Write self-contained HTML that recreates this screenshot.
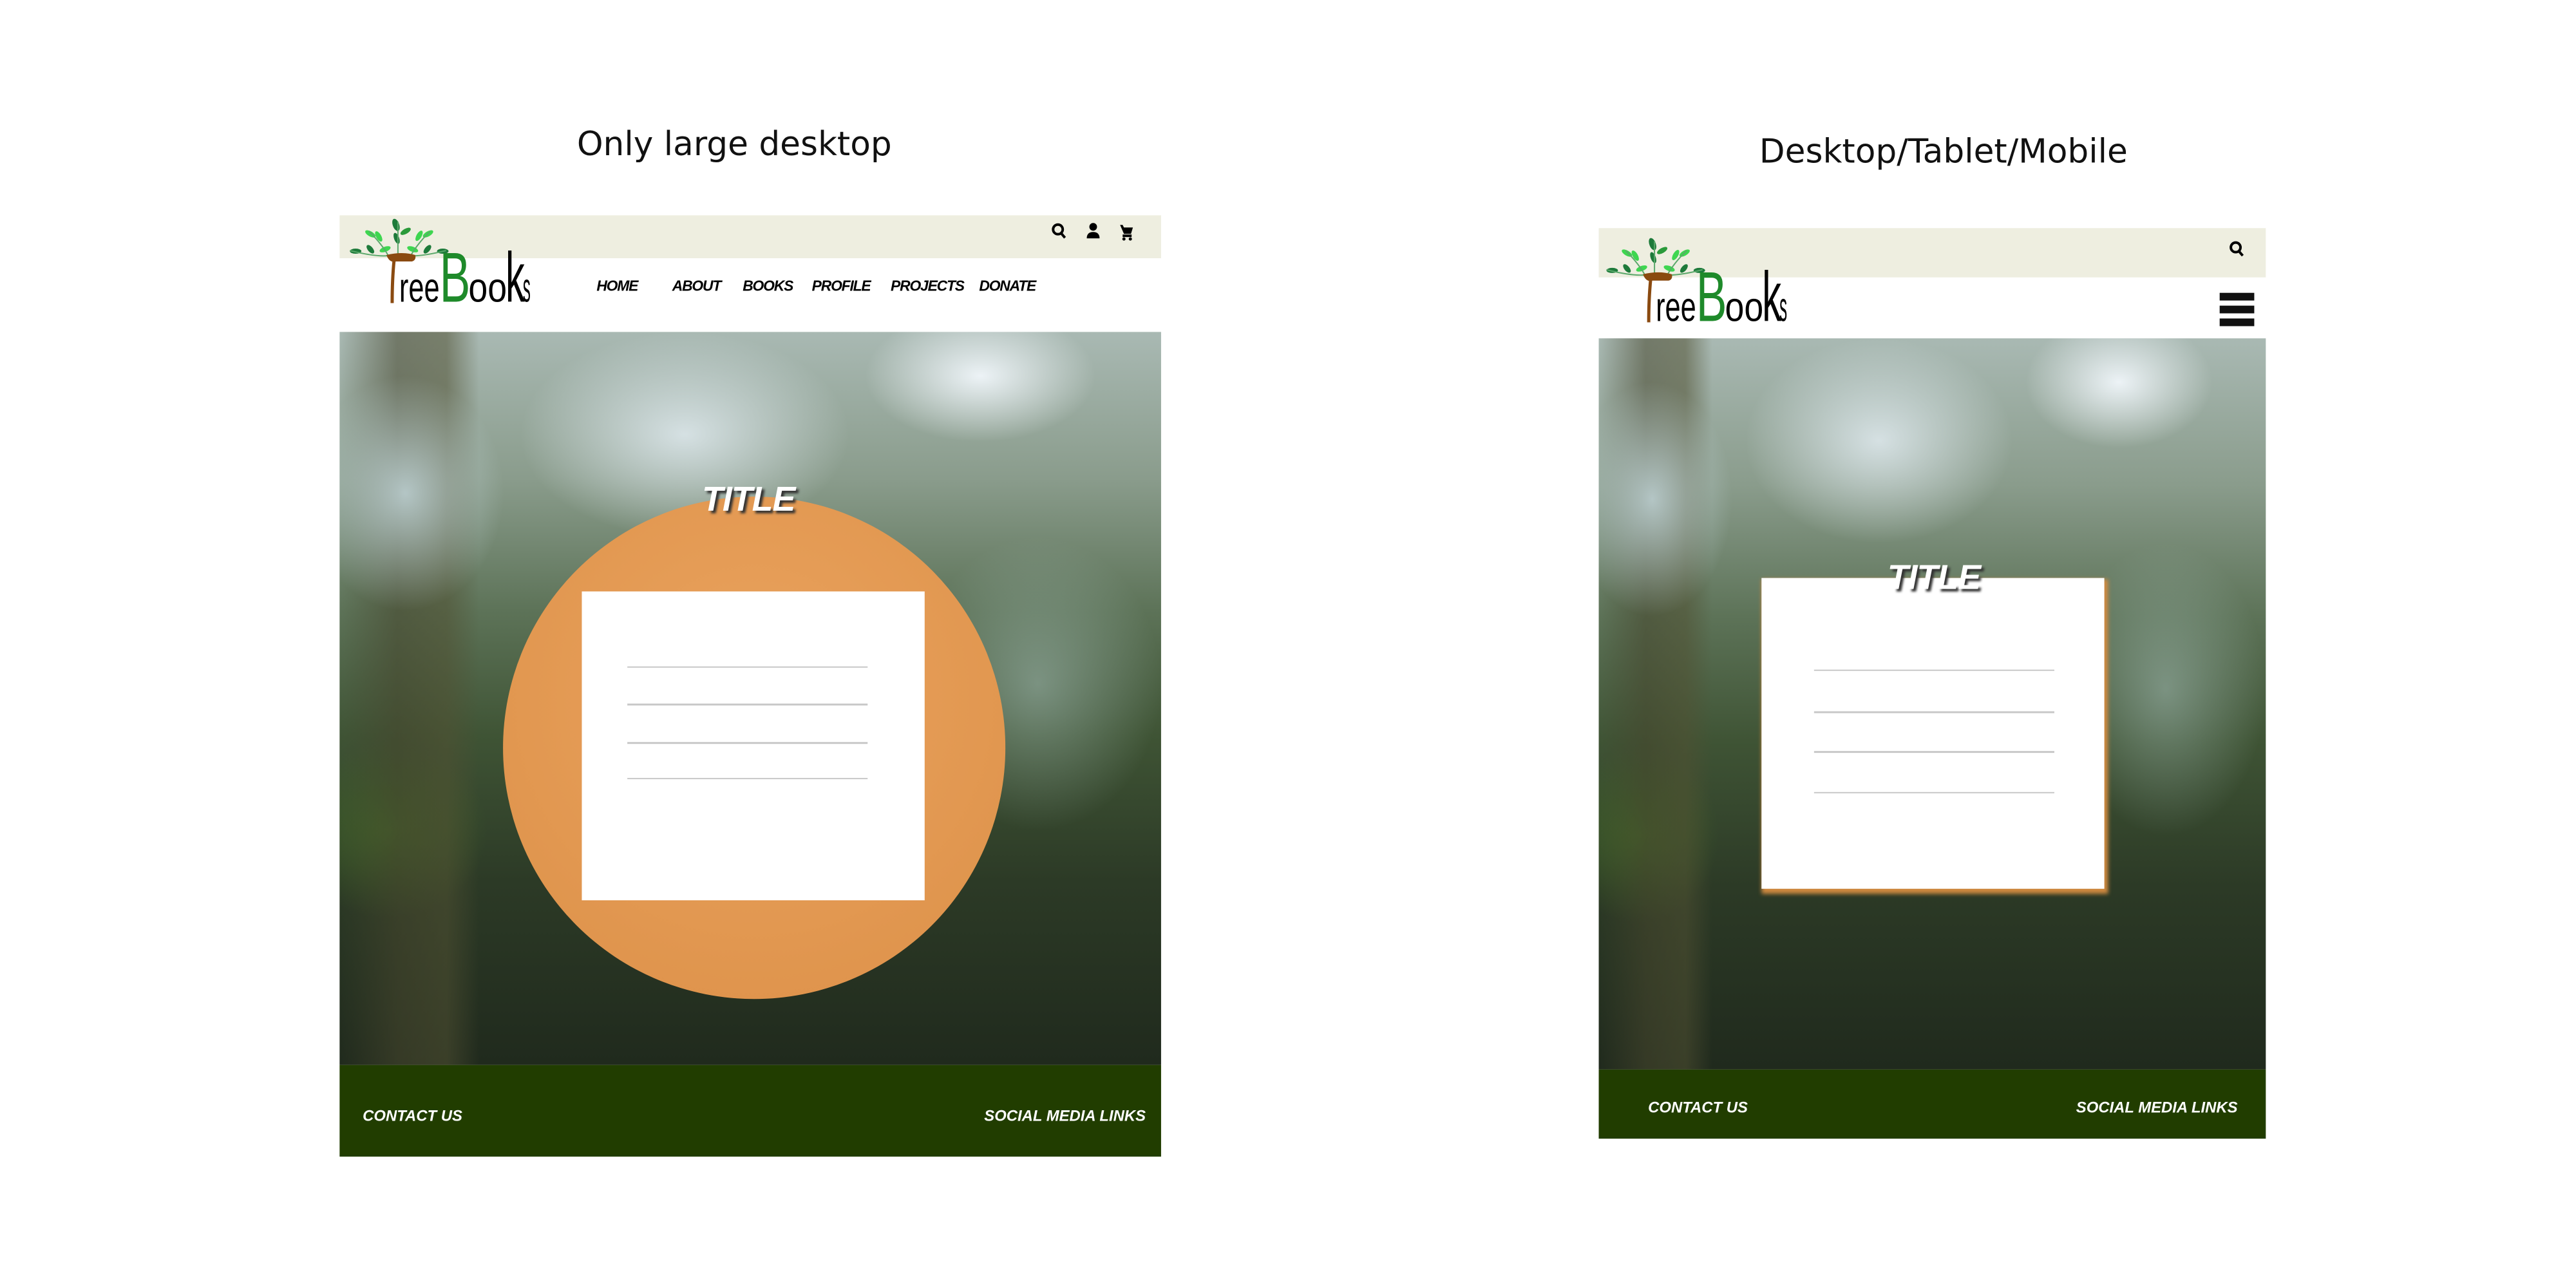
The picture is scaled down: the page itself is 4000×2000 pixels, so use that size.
<!DOCTYPE html>
<html><head><meta charset="utf-8"><style>
*{margin:0;padding:0;box-sizing:border-box}
body{width:4000px;height:2000px;background:#fff;position:relative;overflow:hidden;font-family:"Liberation Sans",sans-serif}
#w{position:absolute;left:0;top:0;width:4020px;height:2010px;transform:scale(0.995);transform-origin:0 0}
.abs{position:absolute}
.cap{position:absolute;font-size:52px;color:#111;transform:translateX(-50%);white-space:nowrap;font-family:"DejaVu Sans",sans-serif}
.bar{position:absolute;background:#eeeee0}
.forest{position:absolute;overflow:hidden;
background:
radial-gradient(ellipse 14% 9% at 78% 6%,rgba(245,250,255,.9),rgba(245,250,255,0) 100%),
radial-gradient(ellipse 20% 14% at 42% 14%,rgba(225,235,240,.85),rgba(225,235,240,0) 100%),
radial-gradient(ellipse 12% 16% at 8% 22%,rgba(200,220,225,.8),rgba(200,220,225,0) 100%),
radial-gradient(ellipse 15% 20% at 85% 48%,rgba(170,195,190,.5),rgba(170,195,190,0) 100%),
linear-gradient(90deg,rgba(60,60,40,.0) 0%,rgba(70,70,45,.55) 7%,rgba(80,80,50,.55) 13%,rgba(0,0,0,0) 17%),
radial-gradient(ellipse 12% 12% at 6% 68%,rgba(70,110,40,.7),rgba(70,110,40,0) 100%),
linear-gradient(180deg,#a9b9b3 0%,#8a9c8c 20%,#5d7358 38%,#3f5435 55%,#2c3a26 75%,#202a1d 100%)}
.foot{position:absolute;background:#213d00;color:#fff;font-family:"Liberation Sans",sans-serif;font-style:italic;font-weight:bold;font-size:24px}
.nav{position:absolute;top:433px;font-style:italic;font-weight:bold;font-size:23px;color:#000;letter-spacing:-1.2px}
.title{position:absolute;font-style:italic;font-weight:bold;font-size:54px;color:#fff;text-shadow:4px 4px 4px #333;transform:translateX(-50%);letter-spacing:-1px}
.ln{position:absolute;height:3px;background:#c8c8c8}
</style></head><body><div id="w">

<div class="cap" style="left:1146px;top:195px">Only large desktop</div>
<div class="cap" style="left:3033px;top:207px">Desktop/Tablet/Mobile</div>

<!-- LEFT MOCKUP -->
<div class="bar" style="left:530px;top:336px;width:1282px;height:67px"></div>
<div class="abs" style="left:530px;top:403px;width:1282px;height:115px;background:#fff"></div>
<svg class="abs" style="left:1640px;top:345px" width="140" height="32" viewBox="0 0 140 32">
<circle cx="11" cy="13" r="7.5" fill="none" stroke="#000" stroke-width="4"/><path d="M16 19l6 7" stroke="#000" stroke-width="4"/>
<circle cx="66" cy="9" r="6" fill="#000"/><path d="M56 27q0-10 10-10q10 0 10 10z" fill="#000"/>
<path d="M108 6l4 0l2 4l14 0l-3 10l-11 0zM112 21h14v4h-14z" fill="#000"/><circle cx="114" cy="28" r="2.5" fill="#000"/><circle cx="124" cy="28" r="2.5" fill="#000"/>
</svg>
<svg class="abs" style="left:531px;top:336px" width="300" height="160" viewBox="0 0 300 160">
<g id="logo">
<g fill="#2a9a3a">
<ellipse cx="87" cy="15" rx="5" ry="10" fill="#1d7a3a" transform="rotate(-20 87 15)"/>
<ellipse cx="102" cy="25" rx="9" ry="4" transform="rotate(-30 102 25)"/>
<ellipse cx="88" cy="36" rx="4" ry="9" fill="#1d7a3a" transform="rotate(-20 88 36)"/>
<ellipse cx="47" cy="29" rx="9" ry="4" fill="#3ed650" transform="rotate(30 47 29)"/>
<ellipse cx="60" cy="33" rx="4" ry="9" fill="#3ed650" transform="rotate(-30 60 33)"/>
<ellipse cx="123" cy="32" rx="4" ry="9" fill="#3ed650" transform="rotate(30 123 32)"/>
<ellipse cx="137" cy="29" rx="9" ry="4" fill="#3ed650" transform="rotate(-30 137 29)"/>
<ellipse cx="70" cy="53" rx="9" ry="4" fill="#3ed650" transform="rotate(-20 70 53)"/>
<ellipse cx="113" cy="53" rx="9" ry="4" fill="#3ed650" transform="rotate(20 113 53)"/>
<ellipse cx="47" cy="53" rx="4" ry="8" fill="#1d7a3a" transform="rotate(-40 47 53)"/>
<ellipse cx="136" cy="53" rx="4" ry="8" fill="#1d7a3a" transform="rotate(40 136 53)"/>
<ellipse cx="24" cy="56" rx="9" ry="4" fill="#1d7a3a"/>
<ellipse cx="160" cy="56" rx="9" ry="4" fill="#1d7a3a"/>
</g>
<path d="M15 55q40 10 60 8M165 55q-40 10-60 8M45 25q20 20 30 38M140 25q-20 20-30 38M90 10v55" stroke="#5aa86a" stroke-width="2" fill="none"/>
<path d="M72 62q25-6 45 0q2 8-5 10l-25 0q-10 3-15-10z" fill="#8a4a10"/>
<path d="M84 70q-3 30-3 67" stroke="#8a4a10" stroke-width="5" fill="none"/>
<text x="92" y="135" font-family="Liberation Sans Narrow, Liberation Sans, sans-serif" font-size="64" fill="#000" textLength="63" lengthAdjust="spacingAndGlyphs">ree</text>
<text x="155" y="135" font-family="Liberation Sans Narrow, Liberation Sans, sans-serif" font-size="110" fill="#1e8a2a" textLength="48" lengthAdjust="spacingAndGlyphs">B</text>
<text x="200" y="135" font-family="Liberation Sans Narrow, Liberation Sans, sans-serif" font-size="64" fill="#000" textLength="60" lengthAdjust="spacingAndGlyphs">oo</text>
<text x="258" y="135" font-family="Liberation Sans Narrow, Liberation Sans, sans-serif" font-size="110" fill="#000" textLength="30" lengthAdjust="spacingAndGlyphs">k</text>
<text x="285" y="135" font-family="Liberation Sans Narrow, Liberation Sans, sans-serif" font-size="64" fill="#000" textLength="12" lengthAdjust="spacingAndGlyphs">s</text>
</g>
</svg>
<div class="nav" style="left:931px">HOME</div>
<div class="nav" style="left:1049px">ABOUT</div>
<div class="nav" style="left:1159px">BOOKS</div>
<div class="nav" style="left:1267px">PROFILE</div>
<div class="nav" style="left:1390px">PROJECTS</div>
<div class="nav" style="left:1528px">DONATE</div>

<div class="forest" style="left:530px;top:518px;width:1282px;height:1144px"></div>
<div class="abs" style="left:785px;top:775px;width:784px;height:784px;border-radius:50%;background:radial-gradient(circle at 50% 40%,#eaa35e,#dc9048)"></div>
<div class="abs" style="left:908px;top:923px;width:535px;height:482px;background:#fff"></div>
<div class="ln" style="left:979px;top:1040px;width:375px;height:2px"></div>
<div class="ln" style="left:979px;top:1098px;width:375px"></div>
<div class="ln" style="left:979px;top:1158px;width:375px"></div>
<div class="ln" style="left:979px;top:1214px;width:375px;height:2px"></div>
<div class="title" style="left:1168px;top:748px">TITLE</div>
<div class="foot" style="left:530px;top:1662px;width:1282px;height:143px">
<span class="abs" style="left:36px;top:66px">CONTACT US</span>
<span class="abs" style="right:24px;top:66px">SOCIAL MEDIA LINKS</span>
</div>

<!-- RIGHT MOCKUP -->
<div class="bar" style="left:2495px;top:356px;width:1041px;height:77px"></div>
<div class="abs" style="left:2495px;top:433px;width:1041px;height:95px;background:#fff"></div>
<svg class="abs" style="left:3478px;top:373px" width="30" height="32" viewBox="0 0 30 32">
<circle cx="11" cy="13" r="7.5" fill="none" stroke="#000" stroke-width="4"/><path d="M16 19l6 7" stroke="#000" stroke-width="4"/>
</svg>
<svg class="abs" style="left:2492px;top:366px" width="300" height="160" viewBox="0 0 300 160"><use href="#logo"/></svg>
<div class="abs" style="left:3464px;top:457px;width:54px;height:12px;background:#111"></div>
<div class="abs" style="left:3464px;top:477px;width:54px;height:12px;background:#111"></div>
<div class="abs" style="left:3464px;top:497px;width:54px;height:12px;background:#111"></div>

<div class="forest" style="left:2495px;top:528px;width:1041px;height:1141px"></div>
<div class="abs" style="left:2749px;top:902px;width:535px;height:485px;background:#fff;box-shadow:3px 5px 6px 3px #d08a40"></div>
<div class="ln" style="left:2831px;top:1045px;width:375px;height:2px"></div>
<div class="ln" style="left:2831px;top:1110px;width:375px"></div>
<div class="ln" style="left:2831px;top:1172px;width:375px"></div>
<div class="ln" style="left:2831px;top:1236px;width:375px;height:2px"></div>
<div class="title" style="left:3018px;top:870px">TITLE</div>
<div class="foot" style="left:2495px;top:1669px;width:1041px;height:108px">
<span class="abs" style="left:77px;top:46px">CONTACT US</span>
<span class="abs" style="right:44px;top:46px">SOCIAL MEDIA LINKS</span>
</div>
</div></body></html>
